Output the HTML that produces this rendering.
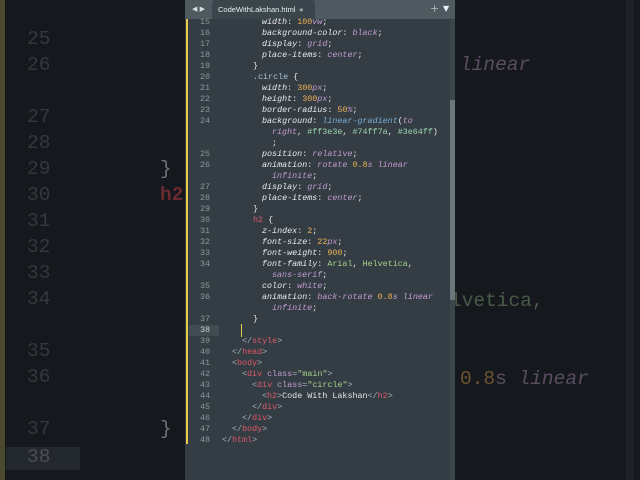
<!DOCTYPE html>
<html><head><meta charset="utf-8"><style>
*{margin:0;padding:0;box-sizing:border-box}
body{width:640px;height:480px;overflow:hidden;background:#15191d;position:relative;font-family:"Liberation Mono",monospace}
.bg{position:absolute;font-size:19.5px;white-space:pre;color:#33383d}
.ed{position:absolute;left:185px;top:0;width:270px;height:480px;background:#333d43;overflow:hidden}
.tabs{position:absolute;left:0;top:0;width:270px;height:19px;background:#4f5a60}
.tab{position:absolute;left:27px;top:0;width:103px;height:19px;background:#3b464c;border-radius:3px 3px 0 0;color:#e8ecee;font-family:"Liberation Sans",sans-serif;font-size:7.5px;line-height:19px;padding-left:6px}
.r{position:absolute;left:0;height:11px;width:270px;font-size:8.4px;line-height:11px;white-space:pre;color:#e6e6e6}
.n{position:absolute;left:0;width:25px;text-align:right;color:#8b979d}
.c{position:absolute}
.p{font-style:italic;color:#ececec}
.v{font-style:italic;color:#c49bd0}
.o{color:#f2b25a}
.f{font-style:italic;color:#7aaed6}
.h{color:#9fd6b0}
.g{color:#a8d08d}
.t{color:#e0586a}
.b{color:#a8b3bb}
.s{color:#a8c0d8}
</style></head><body>
<div style="position:absolute;left:0;top:0;width:5px;height:480px;background:#4b4a2e"></div>
<div style="position:absolute;left:6px;top:447px;width:74px;height:23px;background:#23282c"></div>
<div class="bg" style="left:27px;top:28px">25</div>
<div class="bg" style="left:27px;top:54px">26</div>
<div class="bg" style="left:27px;top:106px">27</div>
<div class="bg" style="left:27px;top:132px">28</div>
<div class="bg" style="left:27px;top:158px">29</div>
<div class="bg" style="left:27px;top:184px">30</div>
<div class="bg" style="left:27px;top:210px">31</div>
<div class="bg" style="left:27px;top:236px">32</div>
<div class="bg" style="left:27px;top:262px">33</div>
<div class="bg" style="left:27px;top:288px">34</div>
<div class="bg" style="left:27px;top:340px">35</div>
<div class="bg" style="left:27px;top:366px">36</div>
<div class="bg" style="left:27px;top:418px">37</div>
<div class="bg" style="left:27px;top:446px;color:#4a4f54">38</div>
<div class="bg" style="left:160px;top:158px;color:#707478">}</div>
<div class="bg" style="left:160px;top:184px;color:#6a2a30;font-weight:bold">h2</div>
<div class="bg" style="left:160px;top:418px;color:#707478">}</div>
<div class="bg" style="left:460px;top:54px;color:#5a4d62;font-style:italic">linear</div>
<div class="bg" style="left:450px;top:290px;color:#4a5a48">lvetica,</div>
<div class="bg" style="left:460px;top:368px;color:#6a5430">0.8<span style="color:#5a4d62">s</span> <span style="color:#5a4d62;font-style:italic">linear</span></div>
<div style="position:absolute;left:626px;top:0;width:8px;height:480px;background:#1d2226"></div>

<div class="ed">
<div class="tabs"><div style="position:absolute;left:7px;top:5px;color:#d8dde0;font-size:7px;font-family:'DejaVu Sans',sans-serif">◀ ▶</div>
<div class="tab">CodeWithLakshan.html<span style="position:absolute;left:87px;top:0;color:#9aa5aa">●</span></div>
<div style="position:absolute;left:245px;top:2px;color:#aab3b8;font-size:11px;font-family:'DejaVu Sans',sans-serif">+</div>
<div style="position:absolute;left:258px;top:4px;color:#eef;font-size:8px;font-family:'DejaVu Sans',sans-serif">▼</div></div>
<div style="position:absolute;left:1px;top:19px;width:2px;height:425px;background:#e8c94a"></div>
<div style="position:absolute;left:265px;top:20px;width:5px;height:460px;background:#3b464c"></div>
<div style="position:absolute;left:265px;top:100px;width:5px;height:200px;background:#6c777c"></div>
<div style="position:absolute;left:4px;top:325px;width:30px;height:11px;background:#414c52"></div>
<div style="position:absolute;left:56px;top:324px;width:1px;height:13px;background:#e8c94a"></div>

<div class="r" style="top:17px"><span class="n">15</span><span class="c" style="left:77px"><span class="p">width</span>: <span class="o">100</span><span class="v">vw</span>;</span></div>
<div class="r" style="top:28px"><span class="n">16</span><span class="c" style="left:77px"><span class="p">background-color</span>: <span class="v">black</span>;</span></div>
<div class="r" style="top:39px"><span class="n">17</span><span class="c" style="left:77px"><span class="p">display</span>: <span class="v">grid</span>;</span></div>
<div class="r" style="top:50px"><span class="n">18</span><span class="c" style="left:77px"><span class="p">place-items</span>: <span class="v">center</span>;</span></div>
<div class="r" style="top:61px"><span class="n">19</span><span class="c" style="left:68px">}</span></div>
<div class="r" style="top:72px"><span class="n">20</span><span class="c s" style="left:68px">.circle <span style="color:#e6e6e6">{</span></span></div>
<div class="r" style="top:83px"><span class="n">21</span><span class="c" style="left:77px"><span class="p">width</span>: <span class="o">300</span><span class="v">px</span>;</span></div>
<div class="r" style="top:94px"><span class="n">22</span><span class="c" style="left:77px"><span class="p">height</span>: <span class="o">300</span><span class="v">px</span>;</span></div>
<div class="r" style="top:105px"><span class="n">23</span><span class="c" style="left:77px"><span class="p">border-radius</span>: <span class="o">50</span><span class="v">%</span>;</span></div>
<div class="r" style="top:116px"><span class="n">24</span><span class="c" style="left:77px"><span class="p">background</span>: <span class="f">linear-gradient</span>(<span class="v">to</span></span></div>
<div class="r" style="top:127px"><span class="c" style="left:87px"><span class="v">right</span>, <span class="h">#ff3e3e</span>, <span class="h">#74ff7a</span>, <span class="h">#3e64ff</span>)</span></div>
<div class="r" style="top:138px"><span class="c" style="left:87px">;</span></div>
<div class="r" style="top:149px"><span class="n">25</span><span class="c" style="left:77px"><span class="p">position</span>: <span class="v">relative</span>;</span></div>
<div class="r" style="top:160px"><span class="n">26</span><span class="c" style="left:77px"><span class="p">animation</span>: <span class="v">rotate</span> <span class="o">0.8</span><span class="v">s</span> <span class="v">linear</span></span></div>
<div class="r" style="top:171px"><span class="c" style="left:87px"><span class="v">infinite</span>;</span></div>
<div class="r" style="top:182px"><span class="n">27</span><span class="c" style="left:77px"><span class="p">display</span>: <span class="v">grid</span>;</span></div>
<div class="r" style="top:193px"><span class="n">28</span><span class="c" style="left:77px"><span class="p">place-items</span>: <span class="v">center</span>;</span></div>
<div class="r" style="top:204px"><span class="n">29</span><span class="c" style="left:68px">}</span></div>
<div class="r" style="top:215px"><span class="n">30</span><span class="c" style="left:68px"><span class="t">h2</span> {</span></div>
<div class="r" style="top:226px"><span class="n">31</span><span class="c" style="left:77px"><span class="p">z-index</span>: <span class="o">2</span>;</span></div>
<div class="r" style="top:237px"><span class="n">32</span><span class="c" style="left:77px"><span class="p">font-size</span>: <span class="o">22</span><span class="v">px</span>;</span></div>
<div class="r" style="top:248px"><span class="n">33</span><span class="c" style="left:77px"><span class="p">font-weight</span>: <span class="o">900</span>;</span></div>
<div class="r" style="top:259px"><span class="n">34</span><span class="c" style="left:77px"><span class="p">font-family</span>: <span class="g">Arial</span>, <span class="g">Helvetica</span>,</span></div>
<div class="r" style="top:270px"><span class="c" style="left:87px"><span class="v">sans-serif</span>;</span></div>
<div class="r" style="top:281px"><span class="n">35</span><span class="c" style="left:77px"><span class="p">color</span>: <span class="v">white</span>;</span></div>
<div class="r" style="top:292px"><span class="n">36</span><span class="c" style="left:77px"><span class="p">animation</span>: <span class="v">back-rotate</span> <span class="o">0.8</span><span class="v">s</span> <span class="v">linear</span></span></div>
<div class="r" style="top:303px"><span class="c" style="left:87px"><span class="v">infinite</span>;</span></div>
<div class="r" style="top:314px"><span class="n">37</span><span class="c" style="left:68px">}</span></div>
<div class="r" style="top:325px"><span class="n" style="color:#c8d0d4">38</span></div>
<div class="r" style="top:336px"><span class="n">39</span><span class="c" style="left:57px"><span class="b">&lt;/</span><span class="t">style</span><span class="b">&gt;</span></span></div>
<div class="r" style="top:347px"><span class="n">40</span><span class="c" style="left:47px"><span class="b">&lt;/</span><span class="t">head</span><span class="b">&gt;</span></span></div>
<div class="r" style="top:358px"><span class="n">41</span><span class="c" style="left:47px"><span class="b">&lt;</span><span class="t">body</span><span class="b">&gt;</span></span></div>
<div class="r" style="top:369px"><span class="n">42</span><span class="c" style="left:57px"><span class="b">&lt;</span><span class="t">div</span> <span class="v" style="font-style:normal">class</span><span class="b">=</span><span class="g">"main"</span><span class="b">&gt;</span></span></div>
<div class="r" style="top:380px"><span class="n">43</span><span class="c" style="left:67px"><span class="b">&lt;</span><span class="t">div</span> <span class="v" style="font-style:normal">class</span><span class="b">=</span><span class="g">"circle"</span><span class="b">&gt;</span></span></div>
<div class="r" style="top:391px"><span class="n">44</span><span class="c" style="left:77px"><span class="b">&lt;</span><span class="t">h2</span><span class="b">&gt;</span>Code With Lakshan<span class="b">&lt;/</span><span class="t">h2</span><span class="b">&gt;</span></span></div>
<div class="r" style="top:402px"><span class="n">45</span><span class="c" style="left:67px"><span class="b">&lt;/</span><span class="t">div</span><span class="b">&gt;</span></span></div>
<div class="r" style="top:413px"><span class="n">46</span><span class="c" style="left:57px"><span class="b">&lt;/</span><span class="t">div</span><span class="b">&gt;</span></span></div>
<div class="r" style="top:424px"><span class="n">47</span><span class="c" style="left:47px"><span class="b">&lt;/</span><span class="t">body</span><span class="b">&gt;</span></span></div>
<div class="r" style="top:435px"><span class="n">48</span><span class="c" style="left:37px"><span class="b">&lt;/</span><span class="t">html</span><span class="b">&gt;</span></span></div>
</div>
</body></html>
